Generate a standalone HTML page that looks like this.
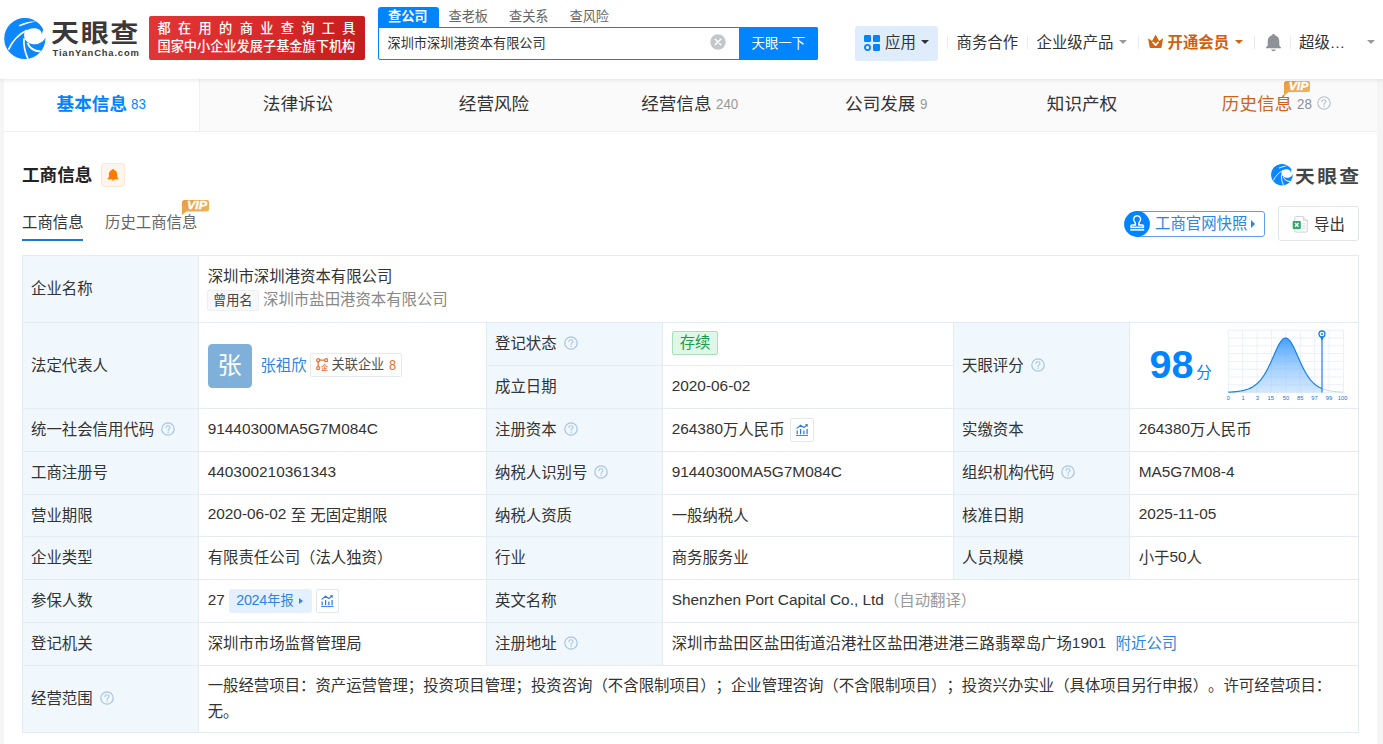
<!DOCTYPE html>
<html lang="zh-CN">
<head>
<meta charset="utf-8">
<title>深圳市深圳港资本有限公司 - 天眼查</title>
<style>
*{box-sizing:border-box;margin:0;padding:0}
html,body{width:1383px;height:744px;overflow:hidden}
body{text-spacing-trim:space-all;background:#f5f5f5;font-family:"Liberation Sans","Noto Sans CJK SC",sans-serif;color:#333;font-size:15.4px;position:relative}
.abs{position:absolute}
.t{position:absolute;white-space:nowrap;line-height:1}
/* header */
#hd{position:absolute;left:0;top:0;width:1383px;height:79px;background:#fff;box-shadow:0 1px 4px rgba(0,0,0,.10);z-index:5}
#main{position:absolute;left:4px;top:79px;width:1373px;height:665px;background:#fff}
.sep{position:absolute;top:36px;width:1px;height:13px;background:#ebebeb}
.nav{position:absolute;top:34px;font-size:15.4px;line-height:17px;white-space:nowrap;color:#333}
.caret{position:absolute;width:0;height:0;border-left:4px solid transparent;border-right:4px solid transparent;border-top:4.5px solid #999}
/* tabs */
#tabs{position:absolute;left:0;top:0;width:1373px;height:53px;background:#fafafa;border-bottom:1px solid #f0f0f0}
.tab{position:absolute;top:0;height:52px;width:196px;text-align:center;font-size:17.6px;line-height:50px;color:#333;white-space:nowrap}
.tab small{font-size:14.3px;color:#999;margin-left:4.5px;display:inline-block;transform:scaleX(.93);transform-origin:left center;position:relative;top:-1.3px;margin-right:-1px}
.tab.on{background:#fff;color:#0084ff;font-weight:bold;border-right:1px solid #f0f0f0}
.tab.on small{color:#0084ff;font-weight:normal}
/* table */
.cell{position:absolute;border:1px solid #e5ebf2;display:flex;align-items:center;padding-left:8px;white-space:nowrap;font-size:15.4px;color:#333;line-height:20px}
.lb{background:#f0f7fd}
.vl{background:#fff;padding-left:8.7px}
.q{margin-left:7px;flex:none;position:relative;top:-.7px}
.lnk{color:#2a86e2}
.v2{margin-top:0}
.v2 .l1{height:24.5px;line-height:24.5px;position:relative;top:.5px}
.v2 .l2{height:24.5px;line-height:24.5px;display:flex;align-items:center;position:relative;top:-.6px;left:-.7px}
.old{display:inline-block;height:21px;line-height:19px;padding:0 5px;font-size:13.2px;color:#444;background:#f6f8fa;border:1px solid #eceff3;border-radius:2px}
.oldn{color:#888;margin-left:4.5px;position:relative;top:-.5px}
.ava{display:inline-block;width:44px;height:44px;border-radius:4.4px;background:#7fb0d9;color:#fff;font-size:24.2px;line-height:44px;text-align:center;flex:none}
.rel{position:relative;top:-1px;display:inline-flex;align-items:center;height:24px;margin-left:3px;padding:0 5px 0 5px;border:1px solid #e6e9ee;border-radius:2px;font-size:13.2px;color:#505050}
.rel .rt{margin-left:3.7px}
.rel .rn{color:#e8722e;font-size:14.3px;margin-left:5px;display:inline-block;transform:scaleX(.9);transform-origin:left center;margin-right:-.8px}
.st{position:relative;top:-1px;display:inline-block;height:23.5px;line-height:21.5px;padding:0 7px;font-size:15.4px;color:#1f9a4c;background:#dff7e7;border:1px solid #a9dfbb;border-radius:2px}
.ib{display:inline-flex;align-items:center;justify-content:center;width:23.5px;height:23.5px;border:1px solid #e3e8ee;border-radius:2px;background:#fff;flex:none}
.yr{display:inline-flex;align-items:center;height:23.5px;margin-left:4.5px;padding:0 9px 0 7px;background:#e4f0fd;border-radius:3px;color:#2a86e2;font-size:13.2px}
.yr i{display:inline-block;margin-left:5.5px;width:0;height:0;border-top:3.5px solid transparent;border-bottom:3.5px solid transparent;border-left:4.2px solid #2a86e2}
.auto{color:#999}
.scope{white-space:normal;line-height:26.2px;width:1140px}
.score{padding:0 !important}
.en{position:relative;top:-1.3px}
.yr .en{font-size:14.3px;letter-spacing:-.3px;top:-1px;margin-right:.3px}
</style>
</head>
<body>
<div id="hd">
  <!-- logo -->
  <svg class="abs" style="left:4px;top:18px" width="42" height="42" viewBox="0 0 42 42">
    <circle cx="20.800" cy="20.500" r="20.600" fill="#0d87ff"/>
    <path d="M22.700 12.500C26 9.900 31.500 9.200 35.200 11.600c1.700 1.300 2.600 3 2.500 4.900l1.600-5.200 4.700-.3v8.400l-2.300-.3c-1.300 3.200-4 5.600-7.300 6.600-3.700 1-7.800.600-11.200-1.800-2-1.700-3.100-4-3.100-6.600 0-1.900.5-3.800 1.900-5.800z" fill="#fff"/>
    <path d="M14.600 7.300C20 4.200 27 3 32.500 3.200 27 4.300 20.500 6.200 15.600 8.500z" fill="#fff"/>
    <path d="M4.500 31.600C8 24 14 16.500 22.900 12.300" fill="none" stroke="#fff" stroke-width="1.700"/>
    <path d="M20.100 20.300C19.300 27 20.800 34 24 41" fill="none" stroke="#fff" stroke-width="1.700"/>
    <path d="M23.400 24.800C25.300 29.600 30 33 36.600 33.500" fill="none" stroke="#fff" stroke-width="1.900"/>
  </svg>
  <div class="t" style="left:51.3px;top:22.2px;font-size:24.6px;font-weight:bold;color:#3c3838;letter-spacing:1.4px;transform:scaleX(1.14);transform-origin:left">天眼查</div>
  <div class="t" style="left:52.5px;top:48px;font-size:9.4px;font-weight:bold;color:#3c3838;letter-spacing:.84px">TianYanCha.com</div>
  <!-- red banner -->
  <div class="abs" style="left:149px;top:16px;width:216px;height:44px;border-radius:2px;background:linear-gradient(100deg,#e23535 0%,#d82a2a 55%,#c41c1c 100%)"></div>
  <div class="t" style="left:157.5px;top:21.5px;font-size:13.2px;color:#fff;font-weight:500;letter-spacing:7.35px">都在用的商业查询工具</div>
  <div class="t" style="left:157.5px;top:39.5px;font-size:13.2px;color:#fff;font-weight:500">国家中小企业发展子基金旗下机构</div>
  <!-- search tabs -->
  <div class="abs" style="left:378px;top:7px;width:61px;height:21px;background:#0084ff;border-radius:3px 3px 0 0"></div>
  <div class="t" style="left:388px;top:9.5px;font-size:13.2px;color:#fff;font-weight:bold">查公司</div>
  <div class="t" style="left:448.5px;top:9.5px;font-size:13.2px;color:#666">查老板</div>
  <div class="t" style="left:509px;top:9.5px;font-size:13.2px;color:#666">查关系</div>
  <div class="t" style="left:569.5px;top:9.5px;font-size:13.2px;color:#666">查风险</div>
  <!-- search box -->
  <div class="abs" style="left:378px;top:27px;width:440px;height:33px;border:1px solid #0084ff;border-radius:0 2px 2px 2px;background:#fff"></div>
  <div class="t" style="left:387.5px;top:37px;font-size:13.2px;color:#333">深圳市深圳港资本有限公司</div>
  <svg class="abs" style="left:710px;top:33.900px" width="16" height="16" viewBox="0 0 16 16"><circle cx="8" cy="8" r="7.7" fill="#c5c6ca"/><path d="M5.2 5.2l5.6 5.6M10.8 5.2l-5.6 5.6" stroke="#fff" stroke-width="1.4" stroke-linecap="round"/></svg>
  <div class="abs" style="left:739px;top:27px;width:79px;height:33px;background:#0084ff;border-radius:0 2px 2px 0"></div>
  <div class="t" style="left:751.5px;top:36.5px;font-size:13.4px;color:#fff">天眼一下</div>
  <!-- app -->
  <div class="abs" style="left:855px;top:26px;width:83px;height:35px;background:#deecfc;border-radius:3px"></div>
  <svg class="abs" style="left:864px;top:35px" width="16" height="16" viewBox="0 0 16 16"><rect x="0" y="0" width="7" height="7" rx="1.3" fill="#0084ff"/><rect x="9" y="0" width="7" height="7" rx="1.3" fill="#0084ff"/><rect x="9" y="9" width="7" height="7" rx="1.3" fill="#0084ff"/><circle cx="3.5" cy="12.5" r="2.6" fill="none" stroke="#0084ff" stroke-width="1.8"/></svg>
  <div class="nav" style="left:885px">应用</div>
  <div class="caret" style="left:921px;top:40px;border-top-color:#333"></div>
  <div class="sep" style="left:947px"></div>
  <div class="nav" style="left:956.5px">商务合作</div>
  <div class="sep" style="left:1027px"></div>
  <div class="nav" style="left:1036.5px">企业级产品</div>
  <div class="caret" style="left:1119px;top:40px"></div>
  <div class="sep" style="left:1138px"></div>
  <svg class="abs" style="left:1148px;top:34.800px" width="15.200" height="13.400" viewBox="0 0 15.200 13.400"><path d="M.2 4.200c-.1-.5.400-.8.800-.5L4 5.900 7.100.4c.2-.4.800-.4 1 0L11.200 5.900l3-2.200c.4-.3.900 0 .8.500l-1.400 7.900c-.1.800-.7 1.300-1.500 1.300H3.100c-.8 0-1.400-.5-1.500-1.300z" fill="#d46410"/><path d="M5 7.300l2.600 2.800 2.600-2.800" fill="none" stroke="#fff" stroke-width="1.700" stroke-linecap="round" stroke-linejoin="round"/></svg>
  <div class="nav" style="left:1167.5px;color:#d06010;font-weight:bold">开通会员</div>
  <div class="caret" style="left:1234.5px;top:40px;border-top-color:#d46410"></div>
  <div class="sep" style="left:1254px"></div>
  <svg class="abs" style="left:1265px;top:34px" width="17" height="18" viewBox="0 0 17 18"><path d="M8.500 0c.8 0 1.300.5 1.400 1.200 2.700.7 4.400 3 4.400 5.900v4.300l1.700 2.100v.8H1v-.8l1.700-2.100V7.100c0-2.900 1.700-5.200 4.400-5.900C7.200.5 7.700 0 8.500 0z" fill="#8e9197"/><path d="M6.200 15.600h4.600c-.3 1.100-1.200 1.700-2.300 1.700s-2-.6-2.300-1.700z" fill="#8e9197"/></svg>
  <div class="sep" style="left:1290px"></div>
  <div class="nav" style="left:1299px">超级…</div>
  <div class="caret" style="left:1366.5px;top:40px"></div>
</div>
<div id="main">
  <div id="tabs">
    <div class="tab on" style="left:0">基本信息<small>83</small></div>
    <div class="tab" style="left:196px">法律诉讼</div>
    <div class="tab" style="left:392px">经营风险</div>
    <div class="tab" style="left:588px">经营信息<small>240</small></div>
    <div class="tab" style="left:784px">公司发展<small>9</small></div>
    <div class="tab" style="left:980px">知识产权</div>
    <div class="tab" style="left:1176px;color:#c8651b;padding-right:3px">历史信息<small style="color:#8a8f99">28</small><svg style="margin-left:5.500px;vertical-align:0px" width="14" height="14" viewBox="0 0 14 14"><circle cx="7" cy="7" r="6.200" fill="none" stroke="#b9bec7" stroke-width="1.100"/><path d="M5 5.600c0-1.100.9-1.900 2-1.900s2 .7 2 1.800c0 1.400-1.900 1.500-1.900 3" fill="none" stroke="#b9bec7" stroke-width="1.100" stroke-linecap="round"/><circle cx="7.100" cy="10.300" r=".75" fill="#b9bec7"/></svg></div>
    <svg class="abs" style="left:1280px;top:2.400px" width="26" height="15" viewBox="0 0 26 15"><path d="M2.500 0h21.500a2 2 0 0 1 2 2v7a2 2 0 0 1-2 2H4.500L0 15V2.500A2.500 2.500 0 0 1 2.500 0z" fill="url(#vg)"/><text x="4.800" y="9.200" font-family="Liberation Sans,sans-serif" font-size="10" font-weight="bold" font-style="italic" fill="#fff" stroke="#fff" stroke-width=".35" textLength="19.500" lengthAdjust="spacingAndGlyphs">VIP</text></svg>
  </div>
  <!-- section title -->
  <div class="t" style="left:18px;top:88.400px;font-size:17.6px;font-weight:bold;color:#222">工商信息</div>
  <div class="abs" style="left:97px;top:84px;width:24px;height:24px;border:1px solid #fbe8da;background:#fff5ed;border-radius:3px"></div>
  <svg class="abs" style="left:103px;top:89.500px" width="12" height="13" viewBox="0 0 12 13"><path d="M6 0c.6 0 1 .4 1 .9 1.900.5 3.100 2.100 3.100 4.100v3l1.400 1.700v.6H.5v-.6L1.900 8V5c0-2 1.200-3.600 3.100-4.100C5 .4 5.400 0 6 0z" fill="#ff7a00"/><path d="M4.400 10.200h3.200c-.2.900-.8 1.400-1.600 1.400s-1.400-.5-1.600-1.400z" fill="#ff7a00"/></svg>
  <!-- small logo right -->
  <svg class="abs" style="left:1267px;top:85px" width="22" height="22" viewBox="0 0 42 42">
    <circle cx="20.800" cy="20.500" r="20.600" fill="#0d87ff"/>
    <path d="M22.700 12.500C26 9.900 31.500 9.200 35.200 11.600c1.700 1.300 2.600 3 2.500 4.900l1.600-5.200 4.700-.3v8.400l-2.300-.3c-1.300 3.200-4 5.600-7.300 6.600-3.700 1-7.800.600-11.200-1.800-2-1.700-3.100-4-3.100-6.600 0-1.900.5-3.800 1.900-5.800z" fill="#fff"/>
    <path d="M14.600 7.300C20 4.200 27 3 32.500 3.200 27 4.300 20.500 6.200 15.600 8.500z" fill="#fff"/>
    <path d="M4.500 31.600C8 24 14 16.500 22.900 12.300" fill="none" stroke="#fff" stroke-width="1.700"/>
    <path d="M20.100 20.300C19.300 27 20.800 34 24 41" fill="none" stroke="#fff" stroke-width="1.700"/>
    <path d="M23.400 24.800C25.300 29.600 30 33 36.600 33.500" fill="none" stroke="#fff" stroke-width="1.900"/>
  </svg>
  <div class="t" style="left:1291px;top:89.600px;font-size:17.700px;font-weight:bold;color:#444;letter-spacing:2.100px;transform:scaleX(1.12);transform-origin:left">天眼查</div>
  <!-- sub tabs -->
  <div class="t" style="left:18px;top:136.200px;font-size:15.400px;color:#333">工商信息</div>
  <div class="abs" style="left:18px;top:160px;width:61px;height:2px;background:#1e78d2"></div>
  <div class="t" style="left:101px;top:136.200px;font-size:15.400px;color:#666">历史工商信息</div>
  <svg class="abs vip" style="left:178px;top:121px" width="27" height="15" viewBox="0 0 27 15"><defs><linearGradient id="vg" x1="0" y1="0" x2="1" y2="1"><stop offset="0" stop-color="#e89a3c"/><stop offset="1" stop-color="#f2b766"/></linearGradient></defs><path d="M2.500 0h22.500a2 2 0 0 1 2 2v7.500a2 2 0 0 1-2 2H4.500L0 15V2.500A2.500 2.500 0 0 1 2.500 0z" fill="url(#vg)"/><text x="5" y="9.400" font-family="Liberation Sans,sans-serif" font-size="10" font-weight="bold" font-style="italic" fill="#fff" stroke="#fff" stroke-width=".35" textLength="20" lengthAdjust="spacingAndGlyphs">VIP</text></svg>
  <!-- buttons right -->
  <div class="abs" style="left:1130px;top:132px;width:131px;height:26px;border:1px solid #5f9fe8;border-radius:3px;background:#fff"></div>
  <svg class="abs" style="left:1119.900px;top:131.900px" width="26" height="26" viewBox="0 0 26 26"><circle cx="13" cy="13" r="12.900" fill="#0084ff"/><path d="M13.100 4.750a3.550 3.550 0 0 1 2.400 6.170c-.5.500-.7 1.200-.7 2v1h3.600c.6 0 1.050.450 1.050 1.050v1.200H6.950v-1.200c0-.6.450-1.050 1.050-1.050h3.400v-1c0-.8-.2-1.500-.7-2A3.550 3.550 0 0 1 13.100 4.750z" fill="none" stroke="#fff" stroke-width="1.500" stroke-linejoin="round"/><path d="M6.200 18.800h14" stroke="#d4f1ff" stroke-width="2"/></svg>
  <div class="t" style="left:1151px;top:137px;font-size:15.400px;color:#2a86e2">工商官网快照</div>
  <div class="abs" style="left:1247px;top:141px;width:0;height:0;border-top:4px solid transparent;border-bottom:4px solid transparent;border-left:4.500px solid #2a86e2"></div>
  <div class="abs" style="left:1274px;top:127px;width:81px;height:35px;border:1px solid #e3e5ea;border-radius:3px;background:#fff"></div>
  <svg class="abs" style="left:1288px;top:136.600px" width="16" height="17" viewBox="0 0 16 17"><path d="M3.700.6h7.600l4 4v10.600a.9.900 0 0 1-.9.900H3.700a.9.900 0 0 1-.9-.9V1.500a.9.900 0 0 1 .9-.9z" fill="#fdfdfd" stroke="#c9cdd3" stroke-width=".9"/><path d="M11.300.6v4h4" fill="#eceef0" stroke="#c9cdd3" stroke-width=".8"/><path d="M10.300 7.800h3.200M10.300 10h3.200M10.300 12.200h3.200" stroke="#d3d6da" stroke-width="1.100"/><rect x=".7" y="4.900" width="8.100" height="8.100" rx=".8" fill="#2fa868"/><path d="M3 7.100l3.500 3.700M6.500 7.100L3 10.800" stroke="#fff" stroke-width="1.400"/></svg>
  <div class="t" style="left:1310px;top:137.500px;font-size:15.400px;color:#333">导出</div>
  <div class="cell lb" style="left:18px;top:176px;width:177px;height:68px"><span class="lt">企业名称</span></div>
  <div class="cell vl multi" style="left:194px;top:176px;width:1161px;height:68px"><div class="v2"><div class="l1">深圳市深圳港资本有限公司</div><div class="l2"><span class="old">曾用名</span><span class="oldn">深圳市盐田港资本有限公司</span></div></div></div>
  <div class="cell lb" style="left:18px;top:243px;width:177px;height:87px"><span class="lt">法定代表人</span></div>
  <div class="cell vl " style="left:194px;top:243px;width:289px;height:87px"><span class="ava">张</span><span class="lnk" style="margin-left:8.700px">张祖欣</span><span class="rel"><svg width="12.300" height="12.300" viewBox="0 0 13 13"><g fill="none" stroke="#ec7338" stroke-width="1.400"><circle cx="2.300" cy="2.300" r="1.600"/><circle cx="10.700" cy="2.300" r="1.600"/><circle cx="2.300" cy="10.700" r="1.600"/><path d="M3.900 2.300h5.200M2.300 3.900v5.200"/></g><text x="9" y="12.400" font-size="7.500" font-weight="bold" fill="#f0783c" text-anchor="middle" font-family="Noto Sans CJK SC,sans-serif">企</text></svg><span class="rt">关联企业</span><span class="rn">8</span></span></div>
  <div class="cell lb" style="left:482px;top:243px;width:177px;height:44px"><span class="lt">登记状态</span><svg class="q" width="14" height="14" viewBox="0 0 14 14"><circle cx="7" cy="7" r="6.200" fill="none" stroke="#a6c5e2" stroke-width="1.200"/><path d="M5 5.600c0-1.100.9-1.900 2-1.900s2 .7 2 1.800c0 1.400-1.900 1.500-1.900 3" fill="none" stroke="#a9c6e0" stroke-width="1.100" stroke-linecap="round"/><circle cx="7.100" cy="10.300" r=".75" fill="#a9c6e0"/></svg></div>
  <div class="cell vl " style="left:658px;top:243px;width:292px;height:44px"><span class="st">存续</span></div>
  <div class="cell lb" style="left:482px;top:286px;width:177px;height:44px"><span class="lt">成立日期</span></div>
  <div class="cell vl " style="left:658px;top:286px;width:292px;height:44px"><span class="en">2020-06-02</span></div>
  <div class="cell lb" style="left:949px;top:243px;width:177px;height:87px"><span class="lt">天眼评分</span><svg class="q" width="14" height="14" viewBox="0 0 14 14"><circle cx="7" cy="7" r="6.200" fill="none" stroke="#a6c5e2" stroke-width="1.200"/><path d="M5 5.600c0-1.100.9-1.900 2-1.900s2 .7 2 1.800c0 1.400-1.900 1.500-1.900 3" fill="none" stroke="#a9c6e0" stroke-width="1.100" stroke-linecap="round"/><circle cx="7.100" cy="10.300" r=".75" fill="#a9c6e0"/></svg></div>
  <div class="cell vl score" style="left:1125px;top:243px;width:230px;height:87px"><span class="t" style="left:19.600px;top:21.600px;font-size:39.600px;font-weight:bold;color:#0084ff">98</span><span class="t" style="left:66.300px;top:41.500px;font-size:15.400px;color:#0084ff">分</span><svg class="abs" style="left:94px;top:3px" width="132" height="80" viewBox="0 0 132 80"><defs><linearGradient id="sg" x1="0" y1="0" x2="0" y2="1"><stop offset="0" stop-color="#3b9bff" stop-opacity=".95"/><stop offset=".55" stop-color="#6ab3ff" stop-opacity=".6"/><stop offset="1" stop-color="#a8d1ff" stop-opacity=".5"/></linearGradient></defs><path d="M4.3 4.2V66.6M18.7 4.2V66.6M33.1 4.2V66.6M47.5 4.2V66.6M61.9 4.2V66.6M76.3 4.2V66.6M90.7 4.2V66.6M105.1 4.2V66.6M119.5 4.2V66.6M4.3 4.2H119.5M4.3 12.0H119.5M4.3 19.8H119.5M4.3 27.6H119.5M4.3 35.4H119.5M4.3 43.2H119.5M4.3 51.0H119.5M4.3 58.8H119.5M4.3 66.6H119.5" stroke="#e9f1f9" stroke-width="1" fill="none"/><path d="M4.3 66.2 L5.3 66.1 L6.3 66.1 L7.3 66.0 L8.3 65.9 L9.3 65.9 L10.3 65.8 L11.3 65.7 L12.3 65.6 L13.3 65.5 L14.3 65.3 L15.3 65.2 L16.3 65.0 L17.3 64.9 L18.3 64.7 L19.3 64.5 L20.3 64.2 L21.3 63.9 L22.3 63.6 L23.3 63.3 L24.3 63.0 L25.3 62.6 L26.3 62.1 L27.3 61.6 L28.3 61.1 L29.3 60.5 L30.3 59.8 L31.3 59.1 L32.3 58.3 L33.3 57.4 L34.3 56.5 L35.3 55.4 L36.3 54.3 L37.3 53.1 L38.3 51.7 L39.3 50.3 L40.3 48.8 L41.3 47.1 L42.3 45.4 L43.3 43.5 L44.3 41.6 L45.3 39.5 L46.3 37.4 L47.3 35.2 L48.3 32.9 L49.3 30.7 L50.3 28.4 L51.3 26.1 L52.3 23.9 L53.3 21.8 L54.3 19.8 L55.3 17.9 L56.3 16.3 L57.3 14.9 L58.3 13.7 L59.3 12.8 L60.3 12.3 L61.3 12.0 L62.3 12.1 L63.3 12.5 L64.3 13.2 L65.3 14.2 L66.3 15.4 L67.3 16.9 L68.3 18.7 L69.3 20.6 L70.3 22.6 L71.3 24.8 L72.3 27.0 L73.3 29.3 L74.3 31.6 L75.3 33.8 L76.3 36.1 L77.3 38.2 L78.3 40.3 L79.3 42.4 L80.3 44.3 L81.3 46.1 L82.3 47.8 L83.3 49.4 L84.3 50.9 L85.3 52.3 L86.3 53.6 L87.3 54.8 L88.3 55.9 L89.3 56.9 L90.3 57.8 L91.3 58.6 L92.3 59.4 L93.3 60.1 L94.3 60.7 L95.3 61.3 L96.3 61.8 L97.3 62.3 L98.0 62.6 L98.0 66.6 L4.3 66.6Z" fill="url(#sg)"/><path d="M4.3 66.2 L5.3 66.1 L6.3 66.1 L7.3 66.0 L8.3 65.9 L9.3 65.9 L10.3 65.8 L11.3 65.7 L12.3 65.6 L13.3 65.5 L14.3 65.3 L15.3 65.2 L16.3 65.0 L17.3 64.9 L18.3 64.7 L19.3 64.5 L20.3 64.2 L21.3 63.9 L22.3 63.6 L23.3 63.3 L24.3 63.0 L25.3 62.6 L26.3 62.1 L27.3 61.6 L28.3 61.1 L29.3 60.5 L30.3 59.8 L31.3 59.1 L32.3 58.3 L33.3 57.4 L34.3 56.5 L35.3 55.4 L36.3 54.3 L37.3 53.1 L38.3 51.7 L39.3 50.3 L40.3 48.8 L41.3 47.1 L42.3 45.4 L43.3 43.5 L44.3 41.6 L45.3 39.5 L46.3 37.4 L47.3 35.2 L48.3 32.9 L49.3 30.7 L50.3 28.4 L51.3 26.1 L52.3 23.9 L53.3 21.8 L54.3 19.8 L55.3 17.9 L56.3 16.3 L57.3 14.9 L58.3 13.7 L59.3 12.8 L60.3 12.3 L61.3 12.0 L62.3 12.1 L63.3 12.5 L64.3 13.2 L65.3 14.2 L66.3 15.4 L67.3 16.9 L68.3 18.7 L69.3 20.6 L70.3 22.6 L71.3 24.8 L72.3 27.0 L73.3 29.3 L74.3 31.6 L75.3 33.8 L76.3 36.1 L77.3 38.2 L78.3 40.3 L79.3 42.4 L80.3 44.3 L81.3 46.1 L82.3 47.8 L83.3 49.4 L84.3 50.9 L85.3 52.3 L86.3 53.6 L87.3 54.8 L88.3 55.9 L89.3 56.9 L90.3 57.8 L91.3 58.6 L92.3 59.4 L93.3 60.1 L94.3 60.7 L95.3 61.3 L96.3 61.8 L97.3 62.3 L98.0 62.6" fill="none" stroke="#1b80e4" stroke-width="1.200"/><path d="M98.0 62.6 L99.0 63.0 L100.0 63.4 L101.0 63.7 L102.0 64.0 L103.0 64.2 L104.0 64.5 L105.0 64.7 L106.0 64.9 L107.0 65.1 L108.0 65.2 L109.0 65.4 L110.0 65.5 L111.0 65.6 L112.0 65.7 L113.0 65.8 L114.0 65.9 L115.0 65.9 L116.0 66.0 L117.0 66.1 L118.0 66.1 L119.0 66.2 L119.5 66.2" fill="none" stroke="#cdd5dd" stroke-width="1"/><path d="M98.0 12.0V66.6" stroke="#1b80e4" stroke-width="1.200"/><path d="M95.8 10.2L98.0 15.0L100.2 10.2Z" fill="#1b80e4"/><circle cx="98.0" cy="8.0" r="3" fill="#fff" stroke="#1b80e4" stroke-width="1.300"/><circle cx="98.0" cy="8.0" r="1.100" fill="#1b80e4"/><g font-family="Liberation Sans,sans-serif" font-size="5.800" fill="#1a73d6" text-anchor="middle"><text x="4.3" y="74.4">0</text><text x="19.0" y="74.4">1</text><text x="33.4" y="74.4">3</text><text x="46.8" y="74.4">15</text><text x="62.0" y="74.4">50</text><text x="76.3" y="74.4">85</text><text x="90.6" y="74.4">97</text><text x="105.0" y="74.4">99</text><text x="118.6" y="74.4">100</text></g></svg></div>
  <div class="cell lb" style="left:18px;top:329px;width:177px;height:44px"><span class="lt">统一社会信用代码</span><svg class="q" width="14" height="14" viewBox="0 0 14 14"><circle cx="7" cy="7" r="6.200" fill="none" stroke="#a6c5e2" stroke-width="1.200"/><path d="M5 5.600c0-1.100.9-1.900 2-1.900s2 .7 2 1.800c0 1.400-1.900 1.500-1.900 3" fill="none" stroke="#a9c6e0" stroke-width="1.100" stroke-linecap="round"/><circle cx="7.100" cy="10.300" r=".75" fill="#a9c6e0"/></svg></div>
  <div class="cell vl " style="left:194px;top:329px;width:289px;height:44px"><span class="en">91440300MA5G7M084C</span></div>
  <div class="cell lb" style="left:482px;top:329px;width:177px;height:44px"><span class="lt">注册资本</span><svg class="q" width="14" height="14" viewBox="0 0 14 14"><circle cx="7" cy="7" r="6.200" fill="none" stroke="#a6c5e2" stroke-width="1.200"/><path d="M5 5.600c0-1.100.9-1.900 2-1.900s2 .7 2 1.800c0 1.400-1.900 1.500-1.900 3" fill="none" stroke="#a9c6e0" stroke-width="1.100" stroke-linecap="round"/><circle cx="7.100" cy="10.300" r=".75" fill="#a9c6e0"/></svg></div>
  <div class="cell vl " style="left:658px;top:329px;width:292px;height:44px"><span class="en">264380</span>万人民币<span class="ib" style="margin-left:5.500px"><svg class="ci" width="12.600" height="12.600" viewBox="0 0 12.600 12.600"><rect x="0" y="10.900" width="12.600" height="1.700" rx=".3" fill="#3a8af0"/><path d="M1.200 10.200V6.500M4.600 10.200V5.100M7.900 10.200V6.500M11.100 10.200V5" stroke="#2a7de1" stroke-width="1.250"/><path d="M1 4.100L4.600 1.200l3.300 2.400 2.700-2.300" fill="none" stroke="#2a7de1" stroke-width="1.200" stroke-linejoin="round" stroke-linecap="round"/><path d="M11.900 0L8.900.5l2.600 2.700z" fill="#2a7de1"/></svg></span></div>
  <div class="cell lb" style="left:949px;top:329px;width:177px;height:44px"><span class="lt">实缴资本</span></div>
  <div class="cell vl " style="left:1125px;top:329px;width:230px;height:44px"><span class="en">264380</span>万人民币</div>
  <div class="cell lb" style="left:18px;top:372px;width:177px;height:44px"><span class="lt">工商注册号</span></div>
  <div class="cell vl " style="left:194px;top:372px;width:289px;height:44px"><span class="en">440300210361343</span></div>
  <div class="cell lb" style="left:482px;top:372px;width:177px;height:44px"><span class="lt">纳税人识别号</span><svg class="q" width="14" height="14" viewBox="0 0 14 14"><circle cx="7" cy="7" r="6.200" fill="none" stroke="#a6c5e2" stroke-width="1.200"/><path d="M5 5.600c0-1.100.9-1.900 2-1.900s2 .7 2 1.800c0 1.400-1.900 1.500-1.900 3" fill="none" stroke="#a9c6e0" stroke-width="1.100" stroke-linecap="round"/><circle cx="7.100" cy="10.300" r=".75" fill="#a9c6e0"/></svg></div>
  <div class="cell vl " style="left:658px;top:372px;width:292px;height:44px"><span class="en">91440300MA5G7M084C</span></div>
  <div class="cell lb" style="left:949px;top:372px;width:177px;height:44px"><span class="lt">组织机构代码</span><svg class="q" width="14" height="14" viewBox="0 0 14 14"><circle cx="7" cy="7" r="6.200" fill="none" stroke="#a6c5e2" stroke-width="1.200"/><path d="M5 5.600c0-1.100.9-1.900 2-1.900s2 .7 2 1.800c0 1.400-1.900 1.500-1.900 3" fill="none" stroke="#a9c6e0" stroke-width="1.100" stroke-linecap="round"/><circle cx="7.100" cy="10.300" r=".75" fill="#a9c6e0"/></svg></div>
  <div class="cell vl " style="left:1125px;top:372px;width:230px;height:44px"><span class="en">MA5G7M08-4</span></div>
  <div class="cell lb" style="left:18px;top:415px;width:177px;height:43px"><span class="lt">营业期限</span></div>
  <div class="cell vl " style="left:194px;top:415px;width:289px;height:43px"><span><span class="en">2020-06-02</span> 至 无固定期限</span></div>
  <div class="cell lb" style="left:482px;top:415px;width:177px;height:43px"><span class="lt">纳税人资质</span></div>
  <div class="cell vl " style="left:658px;top:415px;width:292px;height:43px">一般纳税人</div>
  <div class="cell lb" style="left:949px;top:415px;width:177px;height:43px"><span class="lt">核准日期</span></div>
  <div class="cell vl " style="left:1125px;top:415px;width:230px;height:43px"><span class="en">2025-11-05</span></div>
  <div class="cell lb" style="left:18px;top:457px;width:177px;height:44px"><span class="lt">企业类型</span></div>
  <div class="cell vl fw" style="left:194px;top:457px;width:289px;height:44px">有限责任公司（法人独资）</div>
  <div class="cell lb" style="left:482px;top:457px;width:177px;height:44px"><span class="lt">行业</span></div>
  <div class="cell vl " style="left:658px;top:457px;width:292px;height:44px">商务服务业</div>
  <div class="cell lb" style="left:949px;top:457px;width:177px;height:44px"><span class="lt">人员规模</span></div>
  <div class="cell vl " style="left:1125px;top:457px;width:230px;height:44px">小于<span class="en">50</span>人</div>
  <div class="cell lb" style="left:18px;top:500px;width:177px;height:44px"><span class="lt">参保人数</span></div>
  <div class="cell vl " style="left:194px;top:500px;width:289px;height:44px"><span class="en">27</span><span class="yr"><span class="en">2024</span>年报<i></i></span><span class="ib" style="margin-left:3.700px"><svg class="ci" width="12.600" height="12.600" viewBox="0 0 12.600 12.600"><rect x="0" y="10.900" width="12.600" height="1.700" rx=".3" fill="#3a8af0"/><path d="M1.200 10.200V6.500M4.600 10.200V5.100M7.900 10.200V6.500M11.100 10.200V5" stroke="#2a7de1" stroke-width="1.250"/><path d="M1 4.100L4.600 1.200l3.300 2.400 2.700-2.300" fill="none" stroke="#2a7de1" stroke-width="1.200" stroke-linejoin="round" stroke-linecap="round"/><path d="M11.900 0L8.900.5l2.600 2.700z" fill="#2a7de1"/></svg></span></div>
  <div class="cell lb" style="left:482px;top:500px;width:177px;height:44px"><span class="lt">英文名称</span></div>
  <div class="cell vl " style="left:658px;top:500px;width:697px;height:44px"><span class="en">Shenzhen Port Capital Co., Ltd</span><span class="auto">（自动翻译）</span></div>
  <div class="cell lb" style="left:18px;top:543px;width:177px;height:44px"><span class="lt">登记机关</span></div>
  <div class="cell vl " style="left:194px;top:543px;width:289px;height:44px">深圳市市场监督管理局</div>
  <div class="cell lb" style="left:482px;top:543px;width:177px;height:44px"><span class="lt">注册地址</span><svg class="q" width="14" height="14" viewBox="0 0 14 14"><circle cx="7" cy="7" r="6.200" fill="none" stroke="#a6c5e2" stroke-width="1.200"/><path d="M5 5.600c0-1.100.9-1.900 2-1.900s2 .7 2 1.800c0 1.400-1.900 1.500-1.900 3" fill="none" stroke="#a9c6e0" stroke-width="1.100" stroke-linecap="round"/><circle cx="7.100" cy="10.300" r=".75" fill="#a9c6e0"/></svg></div>
  <div class="cell vl " style="left:658px;top:543px;width:697px;height:44px">深圳市盐田区盐田街道沿港社区盐田港进港三路翡翠岛广场<span class="en">1901</span><span class="lnk" style="margin-left:9.500px">附近公司</span></div>
  <div class="cell lb" style="left:18px;top:586px;width:177px;height:68px"><span class="lt">经营范围</span><svg class="q" width="14" height="14" viewBox="0 0 14 14"><circle cx="7" cy="7" r="6.200" fill="none" stroke="#a6c5e2" stroke-width="1.200"/><path d="M5 5.600c0-1.100.9-1.900 2-1.900s2 .7 2 1.800c0 1.400-1.900 1.500-1.900 3" fill="none" stroke="#a9c6e0" stroke-width="1.100" stroke-linecap="round"/><circle cx="7.100" cy="10.300" r=".75" fill="#a9c6e0"/></svg></div>
  <div class="cell vl multi" style="left:194px;top:586px;width:1161px;height:68px"><div class="scope">一般经营项目：资产运营管理；投资项目管理；投资咨询（不含限制项目）；企业管理咨询（不含限制项目）；投资兴办实业（具体项目另行申报）。许可经营项目：<br>无。</div></div>
</div>
</body>
</html>
